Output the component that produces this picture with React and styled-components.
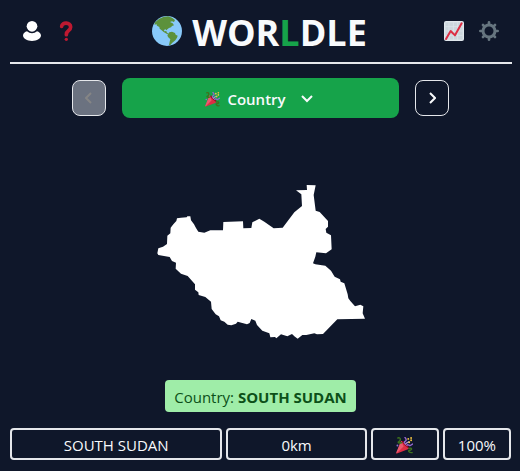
import React from "react";
import styled, { createGlobalStyle } from "styled-components";

const GlobalStyle = createGlobalStyle`
  * { box-sizing: border-box; }
  body {
    margin: 0;
    background: #0f172a;
    color: #f8fafc;
    font-family: "Segoe UI", "Open Sans", "Noto Sans", sans-serif;
    font-size: 15px;
    line-height: 24px;
  }
  button { font: inherit; color: inherit; cursor: pointer; }
`;

const Page = styled.div`
  padding: 0 8px 0 10px;
`;

const Header = styled.header`
  display: flex;
  align-items: center;
  justify-content: space-between;
  height: 64px;
  padding: 0 13px 0 12px;
  border-bottom: 2px solid #e5e7eb;
`;

const Game = styled.div`
  display: flex;
  flex-direction: column;
  padding-right: 1px;
`;

const Tools = styled.div`
  display: flex;
  gap: 15px;
`;

const IconButton = styled.button`
  display: flex;
  padding: 0;
  border: 0;
  background: none;
`;

const Title = styled.h1`
  display: flex;
  align-items: center;
  gap: 10px;
  margin: 0;
  font-size: 36px;
  line-height: 40px;
  font-weight: 700;
`;

const Wordmark = styled.span`
  padding-top: 4px;
`;

const Accent = styled.span`
  color: #16a34a;
`;

const RoundNav = styled.nav`
  display: flex;
  align-items: center;
  justify-content: center;
  gap: 16px;
  padding-top: 14px;
`;

const StepButton = styled.button`
  display: flex;
  align-items: center;
  justify-content: center;
  width: 34px;
  height: 36px;
  padding: 0;
  border: 1px solid #e5e7eb;
  border-radius: 8px;
  background: transparent;
  &:disabled {
    background: #6b7280;
    color: #858585;
    cursor: default;
  }
`;

const RoundButton = styled.button`
  display: flex;
  align-items: center;
  justify-content: center;
  gap: 7px;
  flex: 0 1 277px;
  height: 40px;
  padding: 2px 2px 0 0;
  border: 0;
  border-radius: 8px;
  background: #16a34a;
  font-weight: 600;
`;

const Chevron = styled.svg`
  margin-left: ${(p) => (p.$spaced ? "7px" : "0")};
  fill: none;
  stroke: currentColor;
  stroke-width: 2;
`;

const MapArea = styled.main`
  display: flex;
  justify-content: center;
  padding: 57px 0 35px;
`;

const Answer = styled.p`
  align-self: center;
  margin: 0;
  padding: 5px 9px 3px;
  border-radius: 4px;
  background: #9feda8;
  color: #0c5018;
`;

const Guess = styled.div`
  display: grid;
  grid-template-columns: repeat(7, 1fr);
  gap: 4px;
  margin-top: 16px;
`;

const Cell = styled.div`
  display: flex;
  align-items: center;
  justify-content: center;
  grid-column: span ${(p) => p.$span || 1};
  height: 32px;
  padding-top: 2px;
  border: 2px solid #e5e7eb;
  border-radius: 4px;
`;

const Globe = () => (
  <svg width="30" height="30" viewBox="0 0 90 90" aria-hidden="true">
    <circle cx="45" cy="45" r="45" fill="#88c9f9" />
    <path
      fill="#5c913b"
      d="M11 17L22 8 34 3 48 1 60 5 69 12 66 18 60 16 54 18 62 22 66 28 60 30 57 34 51 36 46 40 44 43 40 40 36 42 37 46 43 45 44 49 49 53 45 54 35 48 29 43 23 38 22 33 15 29 13 24 8 27 8 21ZM52 49L60 47 69 51 71 56 77 59 75 65 70 73 61 80 55 87 51 87 53 77 55 70 48 63 46 57Z"
    />
  </svg>
);

const User = () => (
  <svg width="20" height="20" viewBox="0 0 60 60" fill="#fff" aria-hidden="true">
    <circle cx="30" cy="16" r="16" />
    <path d="M3 43C4 36 9 33 15 31C24 39 36 39 45 31C51 33 56 36 57 43C57 53 45 60 30 60S3 53 3 43Z" />
  </svg>
);

const Question = () => (
  <svg width="18" height="20" viewBox="0 0 54 60" aria-hidden="true">
    <path
      d="M14 16C15 2 41 4 41 18C41 30 28 27 28 41"
      fill="none"
      stroke="#be1931"
      strokeWidth="11"
      strokeLinecap="round"
    />
    <circle cx="28" cy="55" r="5" fill="#be1931" />
  </svg>
);

const Chart = () => (
  <svg width="20" height="20" viewBox="0 0 60 60" aria-hidden="true">
    <rect width="60" height="60" rx="6" fill="#e1e8ed" />
    <rect x="4" y="4" width="52" height="52" fill="#ccd6dd" />
    <path d="M15 4V56M28 4V56M41 4V56M4 17H56M4 30H56M4 43H56" stroke="#e1e8ed" strokeWidth="2" />
    <path
      d="M6 54L20 30 33 43 53 7"
      fill="none"
      stroke="#dd2e44"
      strokeWidth="6"
      strokeLinecap="round"
      strokeLinejoin="round"
    />
  </svg>
);

const Gear = () => (
  <svg width="20" height="20" viewBox="0 0 60 60" fill="none" stroke="#66757f" aria-hidden="true">
    <circle cx="30" cy="30" r="18" strokeWidth="9" />
    <path
      d="M30 4V10M30 50V56M4 30H10M50 30H56M12 12L16 16M44 44L48 48M12 48L16 44M44 16L48 12"
      strokeWidth="8"
      strokeLinecap="round"
    />
  </svg>
);

const Party = ({ size }) => (
  <svg width={size} height={size} viewBox="0 0 36 36" aria-hidden="true">
    <path fill="#dd2e44" d="M11 8L28 25 2 35Q0 36 1 34Z" />
    <path fill="#ea596e" d="M11 8L16 20 2 34Q0 35 1 32Z" />
    <ellipse cx="20" cy="16" rx="2" ry="10" transform="rotate(-45 20 16)" fill="#a0041e" />
    <g fill="none" strokeWidth="3" strokeLinecap="round">
      <path d="M4 2C11 0 10 8 6 10S8 14 12 12M27 24C35 22 34 28 29 28S28 34 34 33" stroke="#3e721d" />
      <path d="M18 13C16 7 24 10 21 4L19 1M23 18C26 13 28 21 32 17L35 15" stroke="#9266cc" />
      <path d="M20 15C23 11 24 13 27 10" stroke="#aa8dd8" />
    </g>
    <g fill="#f4c542">
      <circle cx="26" cy="4" r="2" />
      <circle cx="32" cy="7" r="2" />
      <circle cx="32" cy="2" r="2" />
      <circle cx="28" cy="11" r="2" />
    </g>
    <circle cx="3" cy="18" r="2" fill="#9266cc" />
  </svg>
);

const CountryShape = () => (
  <svg width="220" height="170" viewBox="2 0 660 510" role="img" aria-label="Country outline">
    <path
      fill="#fff"
      d="M21 235L24 220 38 215 50 207 51 182 60 175 61 158 69 148 78 138 80 130 92 128 109 127 111 124 120 124 122 136 131 148 137 159 144 170 162 173 180 166 218 166 219 141 278 139 279 160 303 159 306 142 327 131 342 140 370 160 397 158 432 112 455 93 453 58 437 46 470 45 469 30 496 31 490 60 496 107 508 111 533 138 533 155 526 162 528 173 542 181 544 223 527 235 498 232 495 245 488 265 495 268 525 272 542 287 553 305 569 313 571 320 582 325 592 358 594 370 600 378 614 394 630 389 639 394 637 415 644 431 561 433 518 477 500 478 492 475 468 480 456 480 442 491 432 484 425 477 411 484 392 478 378 490 374 486 360 487 357 475 336 467 320 450 315 437 303 432 298 444 290 448 262 440 257 446 243 451 232 449 222 440 211 436 206 424 196 418 184 402 182 380 165 366 145 360 144 352 134 344 134 328 112 303 92 296 76 281 77 263 65 258 58 246 24 240Z"
    />
  </svg>
);

export default function App() {
  return (
    <>
      <GlobalStyle />
      <Page>
        <Header>
          <Tools>
            <IconButton aria-label="Profile"><User /></IconButton>
            <IconButton aria-label="Help"><Question /></IconButton>
          </Tools>
          <Title>
            <Globe />
            <Wordmark>WOR<Accent>L</Accent>DLE</Wordmark>
          </Title>
          <Tools>
            <IconButton aria-label="Statistics"><Chart /></IconButton>
            <IconButton aria-label="Settings"><Gear /></IconButton>
          </Tools>
        </Header>
        <Game>
          <RoundNav>
            <StepButton disabled aria-label="Previous round">
              <Chevron width="8" height="12" viewBox="0 0 8 12"><path d="M6 1L1 6L6 11" /></Chevron>
            </StepButton>
            <RoundButton aria-haspopup="true">
              <Party size={15} />
              Country
              <Chevron $spaced width="14" height="10" viewBox="0 0 14 10"><path d="M2 2L7 7L12 2" /></Chevron>
            </RoundButton>
            <StepButton aria-label="Next round">
              <Chevron width="8" height="12" viewBox="0 0 8 12"><path d="M2 1L7 6L2 11" /></Chevron>
            </StepButton>
          </RoundNav>
          <MapArea><CountryShape /></MapArea>
          <Answer>Country: <b>SOUTH SUDAN</b></Answer>
          <Guess>
            <Cell $span={3}>SOUTH SUDAN</Cell>
            <Cell $span={2}>0km</Cell>
            <Cell><Party size={17} /></Cell>
            <Cell>100%</Cell>
          </Guess>
        </Game>
      </Page>
    </>
  );
}
